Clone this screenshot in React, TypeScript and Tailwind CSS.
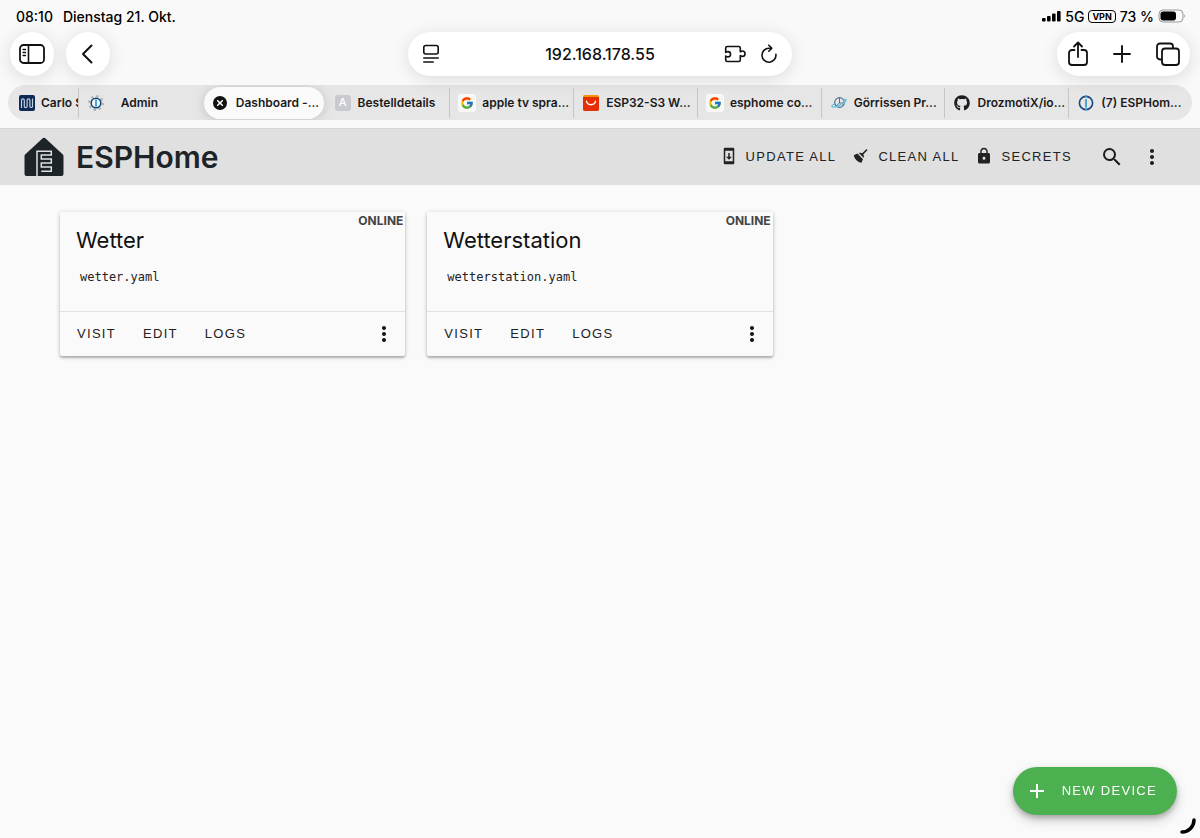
import * as React from 'react';
import { clsx } from 'clsx';
import { MdLock, MdMoreVert, MdSearch } from 'react-icons/md';
import { FaGithub } from 'react-icons/fa';
import { FcGoogle } from 'react-icons/fc';

interface Tab {
  title: string;
  icon: React.ReactNode;
  active?: boolean;
  centered?: boolean;
  divider?: boolean;
}

interface Device {
  name: string;
  file: string;
}

const MeanderIcon = () => (
  <svg viewBox="0 0 16 16" className="size-4">
    <rect width="16" height="16" rx="2" fill="#0d2a55" />
    <path
      d="M2.5 13V5.2a1.4 1.4 0 0 1 2.8 0v6a1.4 1.4 0 0 0 2.8 0v-6a1.4 1.4 0 0 1 2.8 0v6a1.3 1.3 0 0 0 2.6 0V3.5"
      fill="none"
      stroke="#c3cfdf"
      strokeWidth="1.2"
    />
  </svg>
);

const IoBrokerIcon = ({ gear }: { gear?: boolean }) => (
  <svg viewBox="0 0 16 16" className="size-4" fill="none">
    {gear && <circle cx="8" cy="8" r="6.8" stroke="#b4b4b4" strokeWidth="2.2" strokeDasharray="2.4 2.94" />}
    <circle cx="8" cy="8" r={gear ? 4.8 : 6.6} stroke="#15497f" strokeWidth="1.6" fill={gear ? '#f4f8fb' : 'none'} />
    <path d={gear ? 'M8 4.5v7' : 'M8 .5v2M8 4v8.500M8 13.500v2'} stroke="#3a9bd5" strokeWidth="1.8" />
  </svg>
);

const CloseTabIcon = () => (
  <svg viewBox="0 0 16 16" className="size-4">
    <circle cx="8" cy="8" r="7" fill="#111" />
    <path d="M5.700 5.700l4.600 4.600M10.300 5.700l-4.600 4.600" stroke="#fff" strokeWidth="1.6" strokeLinecap="round" />
  </svg>
);

const LetterIcon = () => (
  <span className="flex size-4 items-center justify-center rounded-[3px] bg-[#c9c9d1] text-[11px] font-medium text-white">
    A
  </span>
);

const GoogleIcon = () => (
  <span className="flex size-[18px] shrink-0 items-center justify-center rounded-[3px] bg-[#f8f8f8]">
    <FcGoogle className="size-[14px]" />
  </span>
);

const ShopIcon = () => (
  <svg viewBox="0 0 16 16" className="size-4">
    <rect width="16" height="16" rx="2" fill="#f59300" />
    <path d="M0 2h16v12a2 2 0 0 1-2 2H2a2 2 0 0 1-2-2z" fill="#e62e04" />
    <path d="M3.500 6.200c.6 4.700 8.400 4.700 9 0" fill="none" stroke="#fff" strokeWidth="1.3" strokeLinecap="round" />
  </svg>
);

const OrbitIcon = () => (
  <svg viewBox="0 0 16 16" className="size-4" fill="none">
    <circle cx="8.500" cy="7.500" r="4.800" stroke="#50738e" strokeWidth="1.200" />
    <path d="M8.500 3v5h4.500M5 11l3.500-3" stroke="#50738e" strokeWidth="1" />
    <path d="M4 8.500C1 10 0 11.500 1.500 12c2 .6 8-1.500 11.500-4.200 2-1.600 2.800-2.800 2-3.300-.5-.3-1.300-.1-2 .2" stroke="#5fc0df" strokeWidth="1.100" />
  </svg>
);

const SidebarIcon = () => (
  <svg viewBox="0 0 28 24" className="h-6 w-7" fill="none" stroke="#111" strokeWidth="1.800" strokeLinecap="round">
    <rect x="2" y="3" width="24" height="18" rx="3.500" />
    <path d="M10.500 3v18" strokeWidth="1.600" />
    <path d="M5 7.500h2.500M5 10.500h2.500M5 13.500h2.500" strokeWidth="1.300" />
  </svg>
);

const ReaderIcon = () => (
  <svg viewBox="0 0 18 20" className="h-5 w-[18px]" fill="none" stroke="#111" strokeWidth="1.600" strokeLinecap="round">
    <rect x="1.800" y="1.500" width="14.400" height="8.500" rx="2" />
    <path d="M1.800 14h14.400M1.800 18h9.400" />
  </svg>
);

const ExtensionIcon = () => (
  <svg viewBox="0 0 22 20" className="h-5 w-[22px]" fill="none" stroke="#111" strokeWidth="1.600" strokeLinejoin="round">
    <path d="M3.200 2.500h11.600a1.500 1.500 0 0 1 1.500 1.500v3.800c.6 0 .8-.8 2-.8a2.300 2.300 0 0 1 0 5.400c-1.200 0-1.400-.8-2-.8V16a1.500 1.500 0 0 1-1.500 1.500H3.200A1.500 1.500 0 0 1 1.700 16v-3.900c.7 0 1 .8 2.200.8a2.500 2.500 0 0 0 0-5.300c-1.200 0-1.500.8-2.200.8V4a1.500 1.500 0 0 1 1.500-1.500z" />
  </svg>
);

const ReloadIcon = () => (
  <svg viewBox="0 0 18 20" className="h-5 w-[18px]" fill="none" stroke="#111" strokeWidth="1.600" strokeLinecap="round" strokeLinejoin="round">
    <path d="M15.900 10.300A7 7 0 1 1 9 4.200h2" />
    <path d="M8.800 1.200l3 3-3 3" />
  </svg>
);

const ShareIcon = () => (
  <svg viewBox="0 0 22 26" className="h-[26px] w-[22px]" fill="none" stroke="#111" strokeWidth="1.800" strokeLinecap="round" strokeLinejoin="round">
    <path d="M7.500 9H5a3 3 0 0 0-3 3v9a3 3 0 0 0 3 3h12a3 3 0 0 0 3-3v-9a3 3 0 0 0-3-3h-2.500" />
    <path d="M11 16V1.500M7 5.500l4-4 4 4" />
  </svg>
);

const PlusIcon = () => (
  <svg viewBox="0 0 22 22" className="size-[22px]" stroke="#111" strokeWidth="1.900" strokeLinecap="round">
    <path d="M11 3v16M3 11h16" />
  </svg>
);

const TabsIcon = () => (
  <svg viewBox="0 0 26 26" className="size-[26px]" fill="none" stroke="#111" strokeWidth="1.800">
    <path d="M7 18.500H5A3 3 0 0 1 2 15.500V5.500a3 3 0 0 1 3-3h10a3 3 0 0 1 3 3V7" />
    <rect x="7" y="7.500" width="17" height="16.500" rx="3" />
  </svg>
);

const SignalIcon = () => (
  <svg viewBox="0 0 20 12" className="h-3 w-5" fill="#000">
    <rect x="1" y="8" width="3.600" height="3.500" rx="1" />
    <rect x="6" y="6" width="3.600" height="5.500" rx="1" />
    <rect x="11" y="3.500" width="3.600" height="8" rx="1" />
    <rect x="16" y="1" width="3.600" height="10.500" rx="1" />
  </svg>
);

const BatteryIcon = () => (
  <svg viewBox="0 0 28 14" className="h-[14px] w-7">
    <rect x="1" y="1" width="24" height="12" rx="4" fill="none" stroke="#999" />
    <rect x="2.500" y="2.500" width="15.500" height="9" rx="2.700" fill="#000" />
    <path d="M26.300 5.200c1.200.6 1.200 3 0 3.600z" fill="#999" />
  </svg>
);

const HouseLogo = () => (
  <svg viewBox="0 0 40 40" className="size-10">
    <path
      d="M18.700 1.200a2 2 0 0 1 2.600 0L38.600 17.300a2.600 2.600 0 0 1 .9 1.900V37a2 2 0 0 1-2 2H2.500a2 2 0 0 1-2-2V19.200a2.600 2.600 0 0 1 .9-1.900z"
      fill="#1d2428"
    />
    <path d="M13 39V14.200H27.300V18H17.300v4h10v4h-10v4h10v4.200h-10" fill="none" stroke="#e0e0e0" strokeWidth="1.500" />
  </svg>
);

const UpdateIcon = () => (
  <svg viewBox="0 0 24 24" className="size-[18px]" fill="currentColor">
    <path d="M17.500 1h-11A1.500 1.500 0 0 0 5 2.500v19A1.500 1.500 0 0 0 6.500 23h11a1.500 1.500 0 0 0 1.500-1.500v-19A1.500 1.500 0 0 0 17.500 1zM17 19H7V5h10zM16 13h-3V8h-2v5H8l4 4z" />
  </svg>
);

const BroomIcon = () => (
  <svg viewBox="0 0 24 24" className="size-[18px]" fill="currentColor">
    <path d="M19.360 2.720l1.420 1.420-5.720 5.710c1.070 1.540 1.220 3.390.32 4.590L9.060 8.120c1.200-.9 3.050-.75 4.590.32zM5.930 17.570c-2.010-2.010-3.240-4.410-3.580-6.650l4.880-2.090 7.440 7.440-2.090 4.880c-2.240-.34-4.640-1.570-6.650-3.580" />
  </svg>
);

const tabs: Tab[] = [
  { title: 'Admin', icon: <IoBrokerIcon gear />, centered: true, divider: true },
  { title: 'Dashboard -...', icon: <CloseTabIcon />, active: true },
  { title: 'Bestelldetails', icon: <LetterIcon /> },
  { title: 'apple tv spra...', icon: <GoogleIcon />, divider: true },
  { title: 'ESP32-S3 W...', icon: <ShopIcon />, divider: true },
  { title: 'esphome co...', icon: <GoogleIcon />, divider: true },
  { title: 'Görrissen Pr...', icon: <OrbitIcon />, divider: true },
  { title: 'DrozmotiX/io...', icon: <FaGithub className="size-4 text-[#1b1f23]" />, divider: true },
  { title: '(7) ESPHom...', icon: <IoBrokerIcon />, divider: true },
];

const devices: Device[] = [
  { name: 'Wetter', file: 'wetter.yaml' },
  { name: 'Wetterstation', file: 'wetterstation.yaml' },
];

const StatusBar = () => (
  <div className="flex h-8 items-center justify-between pr-[14px] pl-4 text-[14px] font-medium text-black">
    <div className="flex gap-[10px]">
      <span>08:10</span>
      <span>Dienstag 21. Okt.</span>
    </div>
    <div className="flex items-center gap-1">
      <SignalIcon />
      <span>5G</span>
      <span className="rounded-[4px] border border-black px-[3px] text-[9px] leading-[11px] font-bold">VPN</span>
      <span>73 %</span>
      <BatteryIcon />
    </div>
  </div>
);

const pill = 'flex h-11 items-center rounded-full bg-white shadow-[0_3px_18px_rgba(0,0,0,0.12)]';

const Toolbar = () => (
  <div className="grid grid-cols-[1fr_auto_1fr] items-center px-[10px]">
    <div className="flex gap-3">
      <button type="button" aria-label="Sidebar" className={clsx(pill, 'w-11 justify-center')}>
        <SidebarIcon />
      </button>
      <button type="button" aria-label="Back" className={clsx(pill, 'w-11 justify-center')}>
        <svg viewBox="0 0 14 20" className="h-5 w-[14px]" fill="none" stroke="#111" strokeWidth="2" strokeLinecap="round" strokeLinejoin="round">
          <path d="M10.500 1.500L2 10l8.500 8.500" />
        </svg>
      </button>
    </div>
    <div className={clsx(pill, 'w-96 justify-between px-[14px]')}>
      <button type="button" aria-label="Page menu" className="w-[54px]">
        <ReaderIcon />
      </button>
      <input
        aria-label="Address"
        defaultValue="192.168.178.55"
        className="min-w-0 flex-1 bg-transparent text-center text-[16px] font-medium text-[#111] outline-none"
      />
      <div className="flex gap-[14px]">
        <button type="button" aria-label="Extensions">
          <ExtensionIcon />
        </button>
        <button type="button" aria-label="Reload">
          <ReloadIcon />
        </button>
      </div>
    </div>
    <div className={clsx(pill, 'gap-[22px] justify-self-end pr-[9px] pl-[10px]')}>
      <button type="button" aria-label="Share">
        <ShareIcon />
      </button>
      <button type="button" aria-label="New tab">
        <PlusIcon />
      </button>
      <button type="button" aria-label="All tabs">
        <TabsIcon />
      </button>
    </div>
  </div>
);

const TabStrip = () => (
  <nav className="mx-2 mt-[9px] mb-2 flex h-[35px] items-center overflow-hidden rounded-full bg-[#e6e6e6] text-[12px] font-semibold text-[#1a1a1a]">
    <button type="button" className="flex w-[70px] shrink-0 items-center gap-[6px] overflow-hidden pl-[11px] whitespace-nowrap">
      <span className="shrink-0">
        <MeanderIcon />
      </span>
      <span>Carlo S</span>
    </button>
    {tabs.map((tab) => (
      <div key={tab.title} className="flex h-full min-w-0 flex-1 items-center">
        {tab.divider && <span className="h-[30px] w-px shrink-0 bg-[#c6c6c6]" />}
        <button
          type="button"
          className={clsx(
            'flex min-w-0 flex-1 items-center overflow-hidden whitespace-nowrap',
            tab.active
              ? 'mx-[2px] h-8 gap-2 rounded-full bg-[#fafafa] px-2 shadow-[0_1px_12px_rgba(0,0,0,0.16)]'
              : 'h-full gap-[7px] pl-[9px]',
            tab.centered && 'pr-[34px]'
          )}
        >
          <span className="flex w-4 shrink-0 justify-center">{tab.icon}</span>
          <span className={clsx(tab.centered && 'flex-1 text-center')}>{tab.title}</span>
        </button>
      </div>
    ))}
  </nav>
);

const textButton =
  'flex h-9 items-center gap-2 px-2 font-["Liberation_Sans",Arial,sans-serif] text-[13px] tracking-widest text-[#222] [&>svg]:mb-[3px]';

const AppHeader = () => (
  <header className="flex h-[57px] items-center justify-between border-t border-[#d6d6d6] bg-[#e0e0e0] pr-7 pl-6">
    <a href="#" className="flex items-center gap-3 text-[#1d2428]">
      <HouseLogo />
      <span className="text-[30px] leading-10 font-semibold">ESPHome</span>
    </a>
    <div className="flex items-center text-[#1c1c1c]">
      <button type="button" className={textButton}>
        <UpdateIcon />
        UPDATE ALL
      </button>
      <button type="button" className={textButton}>
        <BroomIcon />
        CLEAN ALL
      </button>
      <button type="button" className={textButton}>
        <MdLock className="size-[18px]" />
        SECRETS
      </button>
      <button type="button" aria-label="Search" className="ml-3 flex size-10 items-center justify-center">
        <MdSearch className="size-6" />
      </button>
      <button type="button" aria-label="More" className="flex size-10 items-center justify-center">
        <MdMoreVert className="size-6" />
      </button>
    </div>
  </header>
);

const DeviceCard = ({ device }: { device: Device }) => (
  <article className="relative rounded-[2px] bg-[#fafafa] shadow-[0_2px_2px_rgba(0,0,0,0.2),0_1px_5px_rgba(0,0,0,0.2)]">
    <span className="absolute top-px right-[2px] text-[12px] leading-4 font-bold text-[#444]">ONLINE</span>
    <div className="h-[99px] px-4 pt-3">
      <h2 className="text-[22px] leading-8 text-[#111]">{device.name}</h2>
      <p className="mt-[13px] px-1 font-['DejaVu_Sans_Mono',monospace] text-[12px] leading-4 text-[#222]">{device.file}</p>
    </div>
    <div className="flex h-[45px] items-center gap-[11px] border-t border-[#e2e2e2] pr-px pl-[9px]">
      <a href="#" className={textButton}>VISIT</a>
      <button type="button" className={textButton}>EDIT</button>
      <button type="button" className={textButton}>LOGS</button>
      <button type="button" aria-label={`More actions for ${device.name}`} className="ml-auto flex size-10 items-center justify-center text-[#111]">
        <MdMoreVert className="size-6" />
      </button>
    </div>
  </article>
);

export default function App() {
  return (
    <div className="min-h-screen bg-[#fafafa] font-[Inter,sans-serif]">
      <div className="flow-root bg-[#f9f9f9]">
        <StatusBar />
        <Toolbar />
        <TabStrip />
      </div>
      <AppHeader />
      <main className="grid grid-cols-3 gap-[22px] px-[60px] pt-[27px]">
        {devices.map((device) => (
          <DeviceCard key={device.file} device={device} />
        ))}
      </main>
      <button
        type="button"
        className="fixed right-[23px] bottom-[23px] flex h-12 items-center gap-[13px] rounded-full bg-[#4caf50] pr-5 pl-3 font-['Liberation_Sans',Arial,sans-serif] text-[13px] tracking-widest text-white shadow-[0_3px_5px_rgba(0,0,0,0.2),0_5px_12px_rgba(0,0,0,0.2)]"
      >
        <svg viewBox="0 0 24 24" className="size-6" stroke="currentColor" strokeWidth="2">
          <path d="M12 5v14M5 12h14" />
        </svg>
        NEW DEVICE
      </button>
      <svg viewBox="0 0 20 20" className="fixed right-0 bottom-0 size-5" fill="none" stroke="#000" strokeWidth="3.500" strokeLinecap="round">
        <path d="M14 2A12 12 0 0 1 2 14" />
      </svg>
    </div>
  );
}
